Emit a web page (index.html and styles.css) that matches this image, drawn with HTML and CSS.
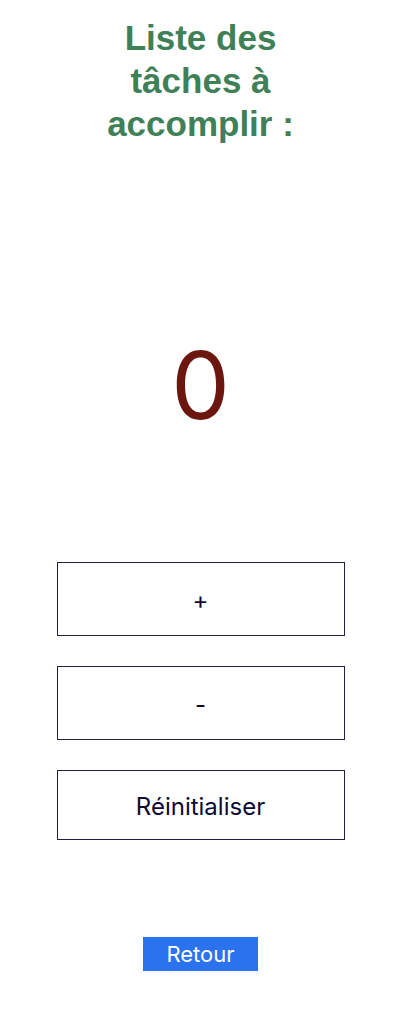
FILE: index.html
```html
<!DOCTYPE html>
<html lang="fr">
<head>
<meta charset="utf-8">
<title>Liste des tâches</title>
<link rel="stylesheet" href="styles.css">
</head>
<body>
<main class="page">
  <h1 class="title">Liste des tâches à accomplir :</h1>
  <div class="count">0</div>
  <div class="actions">
    <button class="box-btn">+</button>
    <button class="box-btn">-</button>
    <button class="box-btn box-btn--reset">Réinitialiser</button>
  </div>
  <button class="back-btn">Retour</button>
</main>
</body>
</html>
```
FILE: styles.css
```css
html, body {
  margin: 0;
  padding: 0;
  background: #ffffff;
}
.page {
  width: 406px;
  display: flex;
  flex-direction: column;
  align-items: center;
  padding-right: 5px;
  box-sizing: border-box;
}
.title {
  margin: 16px 0 0;
  width: 210px;
  text-align: center;
  font-family: "Liberation Sans", Arial, sans-serif;
  font-weight: bold;
  font-size: 35px;
  line-height: 43px;
  color: #3f8057;
}
.count {
  margin-top: 190px;
  font-family: Inter, sans-serif;
  font-size: 93px;
  line-height: 100px;
  color: #6b1710;
}
.actions {
  margin-top: 127px;
  display: flex;
  flex-direction: column;
  gap: 30px;
}
.box-btn {
  width: 288px;
  height: 74px;
  background: #ffffff;
  border: 1.5px solid #231f45;
  font-family: Inter, sans-serif;
  font-size: 24px;
  color: #0c0a33;
  padding: 2px 0 0;
}
.box-btn--reset {
  height: 70px;
}
.back-btn {
  margin-top: 97px;
  width: 115px;
  height: 34px;
  background: #2b72ee;
  border: none;
  color: #ffffff;
  font-family: Inter, sans-serif;
  font-size: 22px;
  padding: 0;
}
```
